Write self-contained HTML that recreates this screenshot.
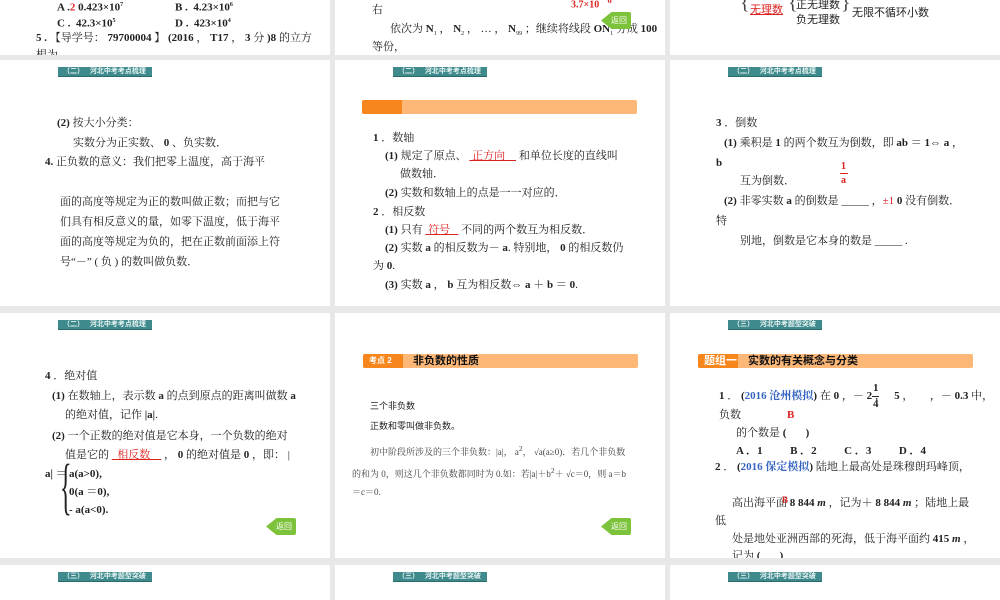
<!DOCTYPE html>
<html><head><meta charset="utf-8"><style>
*{margin:0;padding:0;box-sizing:border-box}
body{width:1000px;height:600px;background:#e8e8e8;position:relative;overflow:hidden;font-family:"Liberation Serif","Noto Serif CJK SC",serif;font-size:11px;color:#222}
.s{position:absolute;background:#fff;overflow:hidden}
.t{position:absolute;white-space:nowrap;line-height:14px}
.hd{position:absolute;height:10px;background:#3f8a8c;color:#e8f4f4;font-family:"Liberation Sans","Noto Sans CJK SC",sans-serif;font-size:7px;font-weight:bold;line-height:10px;padding-left:5px;border-bottom:1px solid #2b6a6b}
.bar{position:absolute;height:14px;background:#fdb878;border-radius:2px}
.bar .k{position:absolute;left:0;top:0;height:14px;background:#f7861c;border-radius:2px 0 0 2px;color:#fff;font-family:"Liberation Sans","Noto Sans CJK SC",sans-serif;font-weight:bold;font-size:8px;line-height:14px;padding-left:6px}
.bar .n{position:absolute;top:0;font-family:"Liberation Sans","Noto Sans CJK SC",sans-serif;font-weight:bold;font-size:11px;line-height:14px;color:#111}
.r{color:#d22}
.u{text-decoration:underline;color:#d22}
.b{font-weight:bold}
.ret{position:absolute;width:30px;height:17px;background:#7cc23a;color:#fff;font-family:"Liberation Sans","Noto Sans CJK SC",sans-serif;font-size:8px;line-height:17px;text-align:right;padding-right:4px;clip-path:polygon(0 50%,35% 0,100% 0,100% 100%,35% 100%);border-radius:2px}
</style></head><body>
<!-- row 1 -->
<div class="s" style="left:0;top:0;width:330px;height:55px">
<div class="t b" style="left:57px;top:-2px">A .<span class="r">2</span> 0.423×10<sup style="font-size:6px">7</sup></div>
<div class="t b" style="left:175px;top:-2px">B .&nbsp; 4.23×10<sup style="font-size:6px">6</sup></div>
<div class="t b" style="left:57px;top:14px">C .&nbsp; 42.3×10<sup style="font-size:6px">5</sup></div>
<div class="t b" style="left:175px;top:14px">D .&nbsp; 423×10<sup style="font-size:6px">4</sup></div>
<div class="t" style="left:36px;top:31px"><b>5 .</b> 【导学号： <b>79700004</b> 】 <b>(2016</b> ， <b>T17</b> ， <b>3</b> 分 <b>)8</b> 的立方</div>
<div class="t" style="left:36px;top:48px">根为</div>
</div>
<div class="s" style="left:335px;top:0;width:330px;height:55px">
<div class="t" style="left:37px;top:3px">右</div>
<div class="t" style="left:55px;top:22px">依次为 <b>N</b><sub style="font-size:6px">1</sub> ， <b>N</b><sub style="font-size:6px">2</sub> ， … ， <b>N</b><sub style="font-size:6px">99</sub> ；继续将线段 <b>ON</b><sub style="font-size:6px">1</sub> 分成 <b>100</b></div>
<div class="t" style="left:37px;top:40px">等份，</div>
<div class="t b r" style="left:236px;top:-6px;font-size:10px">3.7×10<sup>－6</sup></div>
<div class="ret" style="left:266px;top:12px">返回</div>
</div>
<div class="s" style="left:670px;top:0;width:330px;height:55px">
<div class="t" style="left:70px;top:-4px;font-size:20px;color:#444">{</div>
<div class="t u" style="left:80px;top:3px;font-family:'Liberation Sans','Noto Sans CJK SC',sans-serif">无理数</div>
<div class="t" style="left:118px;top:-4px;font-size:20px;color:#444">{</div>
<div class="t" style="left:126px;top:-2px;font-family:'Liberation Sans','Noto Sans CJK SC',sans-serif">正无理数</div>
<div class="t" style="left:126px;top:13px;font-family:'Liberation Sans','Noto Sans CJK SC',sans-serif">负无理数</div>
<div class="t" style="left:171px;top:-4px;font-size:20px;color:#444">}</div>
<div class="t" style="left:182px;top:6px;font-family:'Liberation Sans','Noto Sans CJK SC',sans-serif">无限不循环小数</div>
</div>
<!-- row 2 -->
<div class="s" style="left:0;top:60px;width:330px;height:246px">
<div class="hd" style="left:58px;top:7px;width:94px">（二）&nbsp;&nbsp; 河北中考考点梳理</div>
<div class="t" style="left:57px;top:56px"><b>(2)</b> 按大小分类：</div>
<div class="t" style="left:73px;top:76px">实数分为正实数、 <b>0</b> 、负实数．</div>
<div class="t" style="left:45px;top:95px"><b>4.</b> 正负数的意义：我们把零上温度，高于海平</div>
<div class="t" style="left:60px;top:135px">面的高度等规定为正的数叫做正数；而把与它</div>
<div class="t" style="left:60px;top:155px">们具有相反意义的量，如零下温度，低于海平</div>
<div class="t" style="left:60px;top:175px">面的高度等规定为负的，把在正数前面添上符</div>
<div class="t" style="left:60px;top:195px">号“－” ( 负 ) 的数叫做负数．</div>
</div>
<div class="s" style="left:335px;top:60px;width:330px;height:246px">
<div class="hd" style="left:58px;top:7px;width:94px">（二）&nbsp;&nbsp; 河北中考考点梳理</div>
<div class="bar" style="left:27px;top:40px;width:275px"><div class="k" style="width:40px"></div></div>
<div class="t" style="left:38px;top:71px"><b>1</b> ．数轴</div>
<div class="t" style="left:50px;top:89px"><b>(1)</b> 规定了原点、 <span class="u">&nbsp;正方向&nbsp;&nbsp;&nbsp;&nbsp;</span> 和单位长度的直线叫</div>
<div class="t" style="left:65px;top:107px">做数轴．</div>
<div class="t" style="left:50px;top:126px"><b>(2)</b> 实数和数轴上的点是一一对应的．</div>
<div class="t" style="left:38px;top:145px"><b>2</b> ．相反数</div>
<div class="t" style="left:50px;top:163px"><b>(1)</b> 只有 <span class="u">&nbsp;符号&nbsp;&nbsp;&nbsp;</span> 不同的两个数互为相反数．</div>
<div class="t" style="left:50px;top:181px"><b>(2)</b> 实数 <b>a</b> 的相反数为－ <b>a</b>. 特别地， <b>0</b> 的相反数仍</div>
<div class="t" style="left:38px;top:199px">为 <b>0</b>.</div>
<div class="t" style="left:50px;top:218px"><b>(3)</b> 实数 <b>a</b> ， <b>b</b> 互为相反数⇔ <b>a</b> ＋ <b>b</b> ＝ <b>0</b>.</div>
</div>
<div class="s" style="left:670px;top:60px;width:330px;height:246px">
<div class="hd" style="left:58px;top:7px;width:94px">（二）&nbsp;&nbsp; 河北中考考点梳理</div>
<div class="t" style="left:46px;top:56px"><b>3</b> ．倒数</div>
<div class="t" style="left:54px;top:76px"><b>(1)</b> 乘积是 <b>1</b> 的两个数互为倒数，即 <b>ab</b> ＝ <b>1</b>⇔ <b>a</b> ，</div>
<div class="t b" style="left:46px;top:96px">b</div>
<div class="t r b" style="left:171px;top:100px;font-size:10px">1</div>
<div style="position:absolute;left:170px;top:113px;width:8px;border-top:1px solid #d22"></div>
<div class="t r b" style="left:171px;top:114px;font-size:10px">a</div>
<div class="t" style="left:70px;top:114px">互为倒数．</div>
<div class="t" style="left:54px;top:134px"><b>(2)</b> 非零实数 <b>a</b> 的倒数是 _____ ，<span class="r">±1</span> <b>0</b> 没有倒数．</div>
<div class="t" style="left:46px;top:154px">特</div>
<div class="t" style="left:70px;top:174px">别地，倒数是它本身的数是 _____ .</div>
</div>
<!-- row 3 -->
<div class="s" style="left:0;top:313px;width:330px;height:245px">
<div class="hd" style="left:58px;top:7px;width:94px">（二）&nbsp;&nbsp; 河北中考考点梳理</div>
<div class="t" style="left:45px;top:56px"><b>4</b> ．绝对值</div>
<div class="t" style="left:52px;top:76px"><b>(1)</b> 在数轴上，表示数 <b>a</b> 的点到原点的距离叫做数 <b>a</b></div>
<div class="t" style="left:65px;top:95px">的绝对值，记作 <b>|a|</b>.</div>
<div class="t" style="left:52px;top:116px"><b>(2)</b> 一个正数的绝对值是它本身，一个负数的绝对</div>
<div class="t" style="left:65px;top:135px">值是它的 <span class="u">&nbsp;&nbsp;相反数&nbsp;&nbsp;&nbsp;&nbsp;</span> ， <b>0</b> 的绝对值是 <b>0</b> ，即： |</div>
<div class="t b" style="left:45px;top:154px">a| ＝</div>
<div class="t" style="left:60px;top:150px;font-size:24px;line-height:20px;transform:scaleY(2.6);transform-origin:top left">{</div>
<div class="t b" style="left:69px;top:154px">a(a&gt;0),</div>
<div class="t b" style="left:69px;top:172px">0(a ＝0),</div>
<div class="t b" style="left:69px;top:190px">- a(a&lt;0).</div>
<div class="ret" style="left:266px;top:205px">返回</div>
</div>
<div class="s" style="left:335px;top:313px;width:330px;height:245px">
<div class="bar" style="left:28px;top:41px;width:275px"><div class="k" style="width:40px">考点 2</div><div class="n" style="left:50px">非负数的性质</div></div>
<div class="t" style="left:35px;top:86px;font-size:9px;font-family:'Liberation Sans','Noto Sans CJK SC',sans-serif">三个非负数</div>
<div class="t" style="left:35px;top:106px;font-size:9px;font-family:'Liberation Sans','Noto Sans CJK SC',sans-serif">正数和零叫做非负数。</div>
<div class="t" style="left:35px;top:129px;font-size:9px;color:#444">初中阶段所涉及的三个非负数：|a|， a<sup>2</sup>， √a(a≥0)．若几个非负数</div>
<div class="t" style="left:17px;top:151px;font-size:9px;color:#444">的和为 0，则这几个非负数都同时为 0.如：若|a|＋b<sup>2</sup>＋ √c＝0，则 a＝b</div>
<div class="t" style="left:17px;top:172px;font-size:9px;color:#444">＝c＝0.</div>
<div class="ret" style="left:266px;top:205px">返回</div>
</div>
<div class="s" style="left:670px;top:313px;width:330px;height:245px">
<div class="hd" style="left:58px;top:7px;width:94px">（三）&nbsp;&nbsp; 河北中考题型突破</div>
<div class="bar" style="left:28px;top:41px;width:275px"><div class="k" style="width:40px;font-size:11px">题组一</div><div class="n" style="left:50px">实数的有关概念与分类</div></div>
<div class="t" style="left:49px;top:76px"><b>1</b> ． <b>(<span style="color:#3565c0">2016 沧州模拟</span>)</b> 在 <b>0</b> ，－ <b>2</b> ，&nbsp;&nbsp;&nbsp;<b>5</b> ，&nbsp;&nbsp;&nbsp;&nbsp;&nbsp;&nbsp;，－ <b>0.3</b> 中，</div>
<div class="t b" style="left:203px;top:68px">1</div><div style="position:absolute;left:202px;top:83px;width:7px;border-top:1px solid #222"></div><div class="t b" style="left:203px;top:84px">4</div>
<div class="t" style="left:49px;top:95px">负数</div>
<div class="t b r" style="left:117px;top:95px">B</div>
<div class="t" style="left:66px;top:113px">的个数是 <b>(</b>&nbsp;&nbsp;&nbsp;&nbsp;&nbsp;&nbsp; <b>)</b></div>
<div class="t b" style="left:66px;top:131px">A ．1&nbsp;&nbsp;&nbsp;&nbsp;&nbsp;&nbsp;&nbsp;&nbsp;&nbsp; B ．2&nbsp;&nbsp;&nbsp;&nbsp;&nbsp;&nbsp;&nbsp;&nbsp;&nbsp; C ．3&nbsp;&nbsp;&nbsp;&nbsp;&nbsp;&nbsp;&nbsp;&nbsp;&nbsp; D ．4</div>
<div class="t" style="left:45px;top:147px"><b>2</b> ． <b>(<span style="color:#3565c0">2016 保定模拟</span>)</b> 陆地上最高处是珠穆朗玛峰顶，</div>
<div class="t" style="left:62px;top:183px">高出海平面 <b>8 844 <i>m</i></b> ，记为＋ <b>8 844 <i>m</i></b> ；陆地上最</div>
<div class="t r b" style="left:112px;top:180px;font-size:9px">B</div>
<div class="t" style="left:45px;top:201px">低</div>
<div class="t" style="left:62px;top:219px">处是地处亚洲西部的死海，低于海平面约 <b>415 <i>m</i></b> ，</div>
<div class="t" style="left:62px;top:236px">记为 <b>(</b>&nbsp;&nbsp;&nbsp;&nbsp;&nbsp;&nbsp; <b>)</b></div>
</div>
<!-- row 4 -->
<div class="s" style="left:0;top:565px;width:330px;height:35px"><div class="hd" style="left:58px;top:7px;width:94px">（三）&nbsp;&nbsp; 河北中考题型突破</div></div>
<div class="s" style="left:335px;top:565px;width:330px;height:35px"><div class="hd" style="left:58px;top:7px;width:94px">（三）&nbsp;&nbsp; 河北中考题型突破</div></div>
<div class="s" style="left:670px;top:565px;width:330px;height:35px"><div class="hd" style="left:58px;top:7px;width:94px">（三）&nbsp;&nbsp; 河北中考题型突破</div></div>
</body></html>
